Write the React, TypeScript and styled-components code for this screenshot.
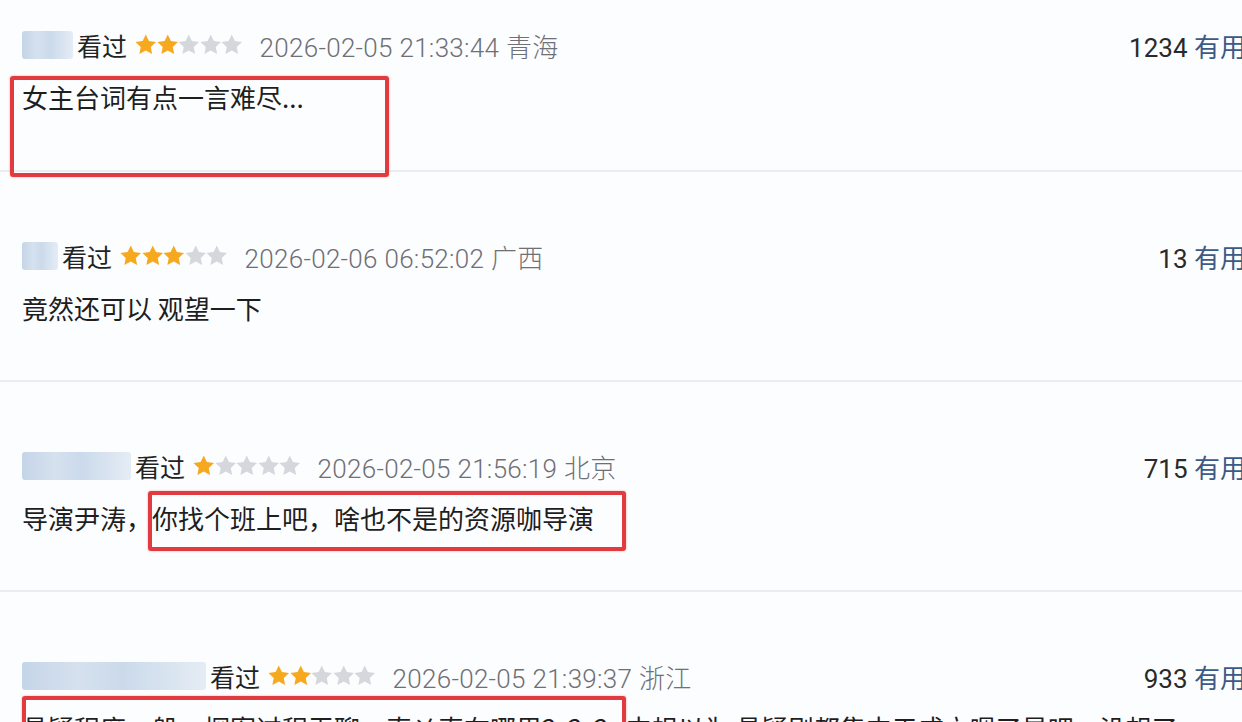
import React from 'react';
import styled, {createGlobalStyle} from 'styled-components';

const GlobalStyle = createGlobalStyle`
  html, body {
    margin: 0;
    padding: 0;
    background: #fcfdfe;
  }
  body {
    font-family: "Noto Sans CJK SC", "Noto Sans", sans-serif;
  }
  * {
    box-sizing: border-box;
  }
`

type CommentType = {
    avatar: number
    rating: number
    time: string
    place: string
    useful: number
    body: React.ReactNode
}

const Page = styled.div`
  width: 1242px;
  height: 722px;
  overflow: hidden;
  background: #fcfdfe;
`
const Item = styled.div<{ $first?: boolean }>`
  position: relative;
  height: ${p => p.$first ? 172 : 210}px;
  padding: ${p => p.$first ? 30 : 69}px 0 0 22px;
  border-bottom: 2px solid #e9edf0;
`
const Header = styled.div`
  display: flex;
  align-items: center;
  height: 30px;
  font-size: 25px;
  color: #222;
`
const Avatar = styled.div<{ $w: number }>`
  width: ${p => p.$w}px;
  height: 28px;
  margin-right: 4px;
  border-radius: 3px;
  filter: blur(0.6px);
  background: linear-gradient(90deg, #bfd1e6 0%, #d2deed 30%, #c6d7ea 55%, #e3ebf4 100%);
  opacity: 0.9;
`
const Watched = styled.span`
  font-size: 25px;
  color: #222;
`
const Stars = styled.div`
  display: flex;
  margin: 0 17px 0 8px;
`
const Star = styled.svg<{ $on: boolean }>`
  width: 21.5px;
  height: 21.5px;
  fill: ${p => p.$on ? '#f6a81f' : '#d4d7dc'};
`
const Time = styled.span`
  font-family: Roboto, "Noto Sans CJK SC", sans-serif;
  font-size: 26px;
  font-weight: 300;
  color: #6f6f76;
  letter-spacing: 0.3px;
`
const Count = styled.span`
  margin-left: auto;
  margin-right: -4px;
  font-family: Roboto, "Noto Sans CJK SC", sans-serif;
  font-size: 26px;
  color: #2a2a2a;
  white-space: nowrap;
`
const Useful = styled.span`
  color: #3d5a86;
`
const Body = styled.div`
  margin-top: 19px;
  font-size: 26px;
  line-height: 36px;
  color: #1e1e1e;
  white-space: nowrap;
`
const Mark = styled.span<{ $t: number, $r: number, $b: number, $l: number }>`
  position: relative;
  &::after {
    content: '';
    position: absolute;
    top: ${p => p.$t}px;
    right: ${p => p.$r}px;
    bottom: ${p => p.$b}px;
    left: ${p => p.$l}px;
    border: 4px solid #e13a3f;
    border-radius: 3px;
    box-shadow: 0 0 2px rgba(225, 58, 63, 0.5);
  }
`

const StarIcon = ({on}: { on: boolean }) => (
    <Star $on={on} viewBox="0 0 24 24">
        <path d="M12 0.6l3.5 7.3 8 1-5.9 5.5 1.5 8L12 18.5l-7.1 3.9 1.5-8L0.5 8.9l8-1z"/>
    </Star>
)

const comments: CommentType[] = [
    {
        avatar: 51, rating: 2, time: '2026-02-05 21:33:44', place: '青海', useful: 1234,
        body: <Mark $t={-2} $r={-85} $b={-62} $l={-12}>女主台词有点一言难尽...</Mark>
    },
    {
        avatar: 36, rating: 3, time: '2026-02-06 06:52:02', place: '广西', useful: 13,
        body: <>竟然还可以 观望一下</>
    },
    {
        avatar: 109, rating: 1, time: '2026-02-05 21:56:19', place: '北京', useful: 715,
        body: <>导演尹涛，<Mark $t={-8} $r={-32} $b={-15} $l={-4}>你找个班上吧，啥也不是的资源咖导演</Mark></>
    },
    {
        avatar: 184, rating: 2, time: '2026-02-05 21:39:37', place: '浙江', useful: 933,
        body: <><Mark $t={-13} $r={-6} $b={-20} $l={0}>悬疑程度一般，探案过程无聊，真凶真在哪里？？？</Mark> 中规以为 悬疑剧都集中于成立嗯了是吧，没想了</>
    },
]

export default function App() {
    return (
        <Page>
            <GlobalStyle/>
            {comments.map((c, i) => (
                <Item key={i} $first={i === 0}>
                    <Header>
                        <Avatar $w={c.avatar}/>
                        <Watched>看过</Watched>
                        <Stars>
                            {[0, 1, 2, 3, 4].map(n => <StarIcon key={n} on={n < c.rating}/>)}
                        </Stars>
                        <Time>{c.time} {c.place}</Time>
                        <Count>{c.useful} <Useful>有用</Useful></Count>
                    </Header>
                    <Body>{c.body}</Body>
                </Item>
            ))}
        </Page>
    )
}
